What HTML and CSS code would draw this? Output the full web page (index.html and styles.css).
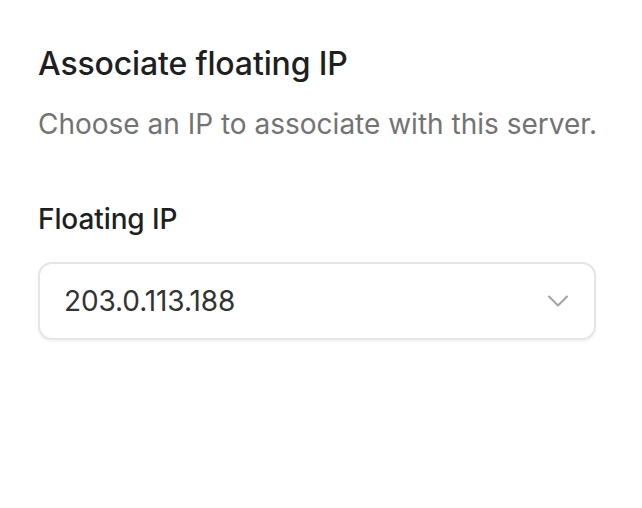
FILE: index.html
```html
<!DOCTYPE html>
<html lang="en">

<head>
    <meta charset="UTF-8">
    <meta name="viewport" content="width=device-width, initial-scale=1.0">
    <title>Associate floating IP</title>
    <link rel="stylesheet" href="styles.css">
</head>

<body>
    <div class="dialog">
        <div class="dialog-header">
            <h2 class="dialog-title">Associate floating IP</h2>
            <p class="dialog-desc">Choose an IP to associate with this server.</p>
        </div>

        <div class="field">
            <label class="field-label" for="floating-ip">Floating IP</label>
            <button class="select" id="floating-ip" type="button">
                <span class="select-value">203.0.113.188</span>
                <svg class="select-icon" width="24" height="24" viewBox="0 0 24 24" fill="none" stroke="currentColor"
                    stroke-width="1.4" stroke-linecap="round" stroke-linejoin="round">
                    <path d="m6 9 6 6 6-6" />
                </svg>
            </button>
        </div>
    </div>
</body>

</html>
```

FILE: styles.css
```css
* {
    margin: 0;
    padding: 0;
    box-sizing: border-box;
}

body {
    background-color: #fff;
    font-family: Inter, "Noto Sans", sans-serif;
    color: #1f1f1f;
}

.dialog {
    padding: 44px 46px 40px 38px;
    display: flex;
    flex-direction: column;
    gap: 59px;
}

.dialog-header {
    display: flex;
    flex-direction: column;
    gap: 22px;
}

.dialog-title {
    font-size: 32px;
    font-weight: 500;
    line-height: 40px;
    letter-spacing: -0.15px;
}

.dialog-desc {
    font-size: 28px;
    line-height: 36px;
    color: #737373;
    white-space: nowrap;
}

.field {
    display: flex;
    flex-direction: column;
    gap: 25px;
}

.field-label {
    font-size: 28px;
    font-weight: 500;
    line-height: 36px;
    letter-spacing: -0.1px;
}

.select {
    display: flex;
    align-items: center;
    justify-content: space-between;
    height: 78px;
    padding: 0 18px 0 24px;
    background: #fff;
    border: 2px solid #e5e5e5;
    border-radius: 14px;
    box-shadow: 0 2px 3px rgba(0, 0, 0, 0.05);
    font-family: inherit;
    text-align: left;
}

.select-value {
    font-size: 28px;
    color: #333;
    letter-spacing: -0.1px;
}

.select-icon {
    width: 36px;
    height: 36px;
    color: #a3a3a3;
}
```
